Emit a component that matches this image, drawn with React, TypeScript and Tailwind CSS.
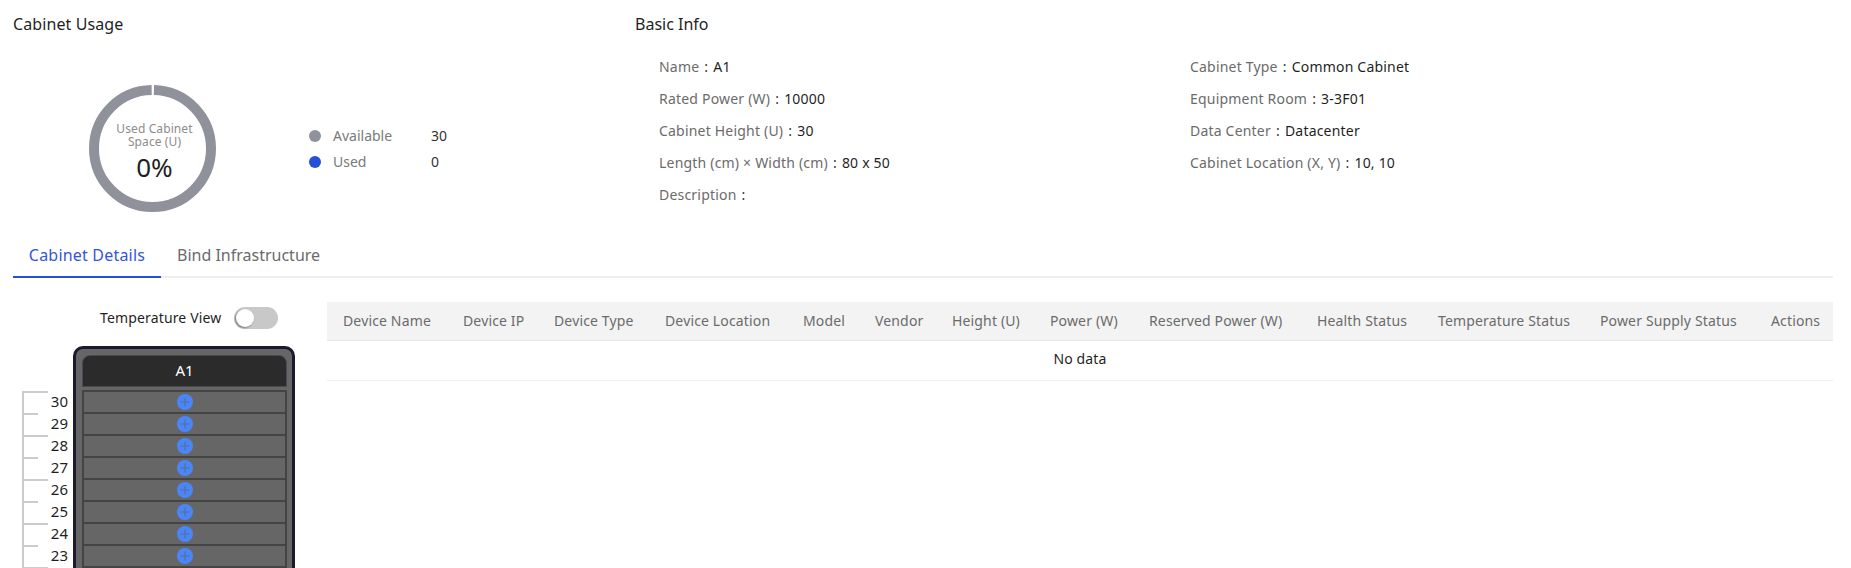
import React, { useState } from 'react'

const leftInfo = [
  ['Name', 'A1'],
  ['Rated Power (W)', '10000'],
  ['Cabinet Height (U)', '30'],
  ['Length (cm) × Width (cm)', '80 x 50'],
  ['Description', ''],
]

const rightInfo = [
  ['Cabinet Type', 'Common Cabinet'],
  ['Equipment Room', '3-3F01'],
  ['Data Center', 'Datacenter'],
  ['Cabinet Location (X, Y)', '10, 10'],
]

const columns = [
  { label: 'Device Name', width: 'w-[120px]' },
  { label: 'Device IP', width: 'w-[91px]' },
  { label: 'Device Type', width: 'w-[111px]' },
  { label: 'Device Location', width: 'w-[138px]' },
  { label: 'Model', width: 'w-[72px]' },
  { label: 'Vendor', width: 'w-[77px]' },
  { label: 'Height (U)', width: 'w-[98px]' },
  { label: 'Power (W)', width: 'w-[99px]' },
  { label: 'Reserved Power (W)', width: 'w-[168px]' },
  { label: 'Health Status', width: 'w-[121px]' },
  { label: 'Temperature Status', width: 'w-[162px]' },
  { label: 'Power Supply Status', width: 'w-[171px]' },
  { label: 'Actions', width: '' },
]

const units = Array.from({ length: 30 }, (_, i) => 30 - i)

const InfoRow = ({ label, value }: { label: string; value: string }) => (
  <div className="h-8 flex items-center text-sm whitespace-nowrap tracking-[0.2px]">
    <span className="text-[#6b6b6b]">{label}</span>
    <span className="text-[#333] ml-[5px] mr-[5px]">:</span>
    <span className="text-[#1f1f1f]">{value}</span>
  </div>
)

const PlusIcon = () => (
  <svg width="16" height="16" viewBox="0 0 16 16">
    <circle cx="8" cy="8" r="8" fill="#4a86f8" />
    <path d="M8 3.5v9M3.5 8h9" stroke="#5b6b88" strokeWidth="1" fill="none" />
  </svg>
)

export default function App() {
  const [tab] = useState('details')

  return (
    <div className="h-[568px] w-[1851px] overflow-hidden bg-white font-['Noto_Sans',sans-serif] text-sm">
      {/* Usage + basic info */}
      <div className="flex h-[230px] pt-[13px]">
        <div className="w-[635px] pl-[13px] shrink-0">
          <h3 className="text-base leading-[22px] text-[#1f1f1f] font-normal tracking-[0.1px]">Cabinet Usage</h3>
          <div className="flex items-center mt-[50px] pl-[76px]">
            <div className="relative w-[127px] h-[127px]">
              <svg width="127" height="127" viewBox="0 0 127 127" className="-rotate-90">
                <circle
                  cx="63.5"
                  cy="63.5"
                  r="58.5"
                  fill="none"
                  stroke="#8f929b"
                  strokeWidth="10"
                  strokeDasharray="364.6 3"
                  strokeDashoffset="-1.5"
                />
              </svg>
              <div className="absolute inset-0 flex flex-col items-center pt-[38px] pl-1 text-center">
                <span className="text-xs leading-[12.5px] text-[#8c8c8c] tracking-[0.1px]">Used Cabinet<br />Space (U)</span>
                <span className="text-[26px] leading-8 text-[#1f1f1f] mt-[3px]">0%</span>
              </div>
            </div>
            <div className="ml-[93px] mt-0">
              <div className="h-[26px] flex items-center">
                <span className="w-3 h-3 rounded-full bg-[#8f929b]" />
                <span className="w-[110px] pl-3 text-[#7a7a7a]">Available</span>
                <span className="text-[#333]">30</span>
              </div>
              <div className="h-[26px] flex items-center">
                <span className="w-3 h-3 rounded-full bg-[#2450d8]" />
                <span className="w-[110px] pl-3 text-[#7a7a7a]">Used</span>
                <span className="text-[#333]">0</span>
              </div>
            </div>
          </div>
        </div>
        <div className="flex-1">
          <h3 className="text-base leading-[22px] text-[#1f1f1f] font-normal">Basic Info</h3>
          <div className="flex mt-4 pl-6">
            <div className="w-[531px]">
              {leftInfo.map(([l, v]) => <InfoRow key={l} label={l} value={v} />)}
            </div>
            <div>
              {rightInfo.map(([l, v]) => <InfoRow key={l} label={l} value={v} />)}
            </div>
          </div>
        </div>
      </div>

      {/* Tabs */}
      <div className="mx-[13px] w-[1820px] flex h-[48px] border-b-2 border-[#eeeeee]">
        <button className={`w-[148px] h-[48px] pt-[3px] text-base tracking-[0.2px] border-b-2 ${tab === 'details' ? 'text-[#3355dd] border-[#2450d8]' : ''}`}>
          Cabinet Details
        </button>
        <button className="ml-4 h-[46px] pt-[4px] text-base text-[#6b6b6b]">Bind Infrastructure</button>
      </div>

      {/* Cabinet + table */}
      <div className="flex pt-[24px]">
        <div className="w-[327px] shrink-0">
          <div className="flex items-center h-[24px] pl-[100px] mt-[4px] tracking-[0.15px]">
            <span className="text-[#1f1f1f]">Temperature View</span>
            <span className="ml-[13px] w-[44px] h-[22px] rounded-full bg-[#c8c8c8] p-[2px]">
              <span className="block w-[18px] h-[18px] rounded-full bg-white shadow-[-1px_1px_2px_rgba(0,0,0,0.4)]" />
            </span>
          </div>
          <div className="flex mt-[16px] pl-[22px]">
            <div className="w-[51px] pt-[45px] shrink-0">
              {units.map((u) => (
                <div key={u} className="relative h-[22px] border-l-2 border-[#cccccc] pr-[5px] text-right leading-[22px] text-[15px] text-[#1f1f1f]">
                  <span className={`absolute left-0 top-0 h-[2px] bg-[#cccccc] ${u % 2 === 0 ? 'w-[24px]' : 'w-[14px]'}`} />
                  <span className="relative top-[-1px] inline-block">{u}</span>
                </div>
              ))}
            </div>
            <div className="w-[222px] shrink-0 border-[3px] border-[#1c1a2a] rounded-t-[10px] bg-[#666666] pl-[6px] pr-[5px] pt-[6px]">
              <div className="h-[32px] rounded-t-[8px] bg-[#2b2b2b] border border-[#4a4a55] flex items-center justify-center text-white text-[15px]">
                A1
              </div>
              <div className="mt-[3px] border-t-2 border-[#444444]">
                {units.map((u) => (
                  <div key={u} className="h-[22px] border-2 border-t-0 border-[#444444] bg-[#666666] flex items-center justify-center">
                    <PlusIcon />
                  </div>
                ))}
              </div>
            </div>
          </div>
        </div>

        <div className="w-[1506px]">
          <table className="w-full table-fixed border-collapse tracking-[0.15px]">
            <thead>
              <tr className="h-[38px] bg-[#f3f3f3] border-b border-[#e8e8e8]">
                {columns.map((c) => (
                  <th key={c.label} className={`${c.width} pl-4 text-left font-normal text-[#6b6b6b] whitespace-nowrap`}>
                    {c.label}
                  </th>
                ))}
              </tr>
            </thead>
            <tbody>
              <tr className="h-[40px] border-b border-[#eeeeee]">
                <td colSpan={13} className="text-center text-[#1f1f1f] pb-[2px]">No data</td>
              </tr>
            </tbody>
          </table>
        </div>
      </div>
    </div>
  )
}
